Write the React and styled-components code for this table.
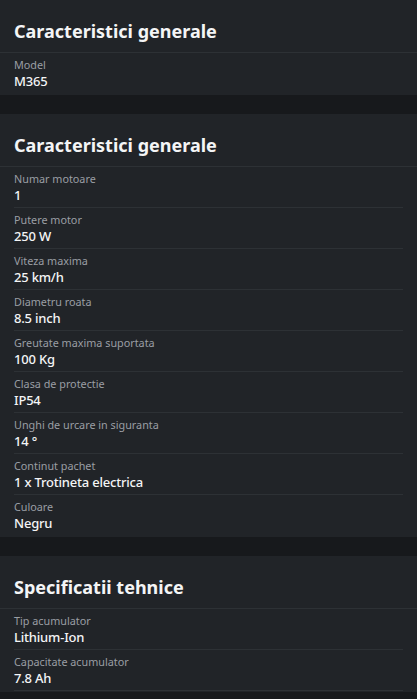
import React from "react";
import styled, { createGlobalStyle } from "styled-components";

const Global = createGlobalStyle`
  html, body { margin: 0; padding: 0; background: #17191c; }
  body { font-family: "Noto Sans", "Open Sans", sans-serif; -webkit-font-smoothing: antialiased; }
  * { box-sizing: border-box; }
`;

const Page = styled.div`
  display: flex;
  flex-direction: column;
  gap: 19px;
`;

const Card = styled.section`
  background: #212428;
  display: flex;
  flex-direction: column;
  padding-bottom: 1px;
`;

const Header = styled.h2`
  margin: 0;
  padding: 19px 14px 9px;
  height: 53px;
  font-size: 18px;
  line-height: 24px;
  font-weight: 700;
  color: #f4f5f6;
  border-bottom: 1px solid #2d3135;
`;

const Row = styled.div`
  margin: 0 14px;
  padding: 5px 0 3px;
  height: 41px;
  display: flex;
  flex-direction: column;
  border-bottom: 1px solid ${(p) => (p.$end ? "transparent" : "#2d3135")};
`;

const Label = styled.span`
  font-size: 10.8px;
  line-height: 14px;
  color: #9a9ea4;
`;

const Value = styled.span`
  font-size: 13px;
  line-height: 18px;
  font-weight: 500;
  letter-spacing: -0.2px;
  color: #f4f5f6;
`;

const sections = [
  { title: "Caracteristici generale", closed: true, rows: [["Model", "M365"]] },
  {
    title: "Caracteristici generale",
    closed: true,
    rows: [
      ["Numar motoare", "1"],
      ["Putere motor", "250 W"],
      ["Viteza maxima", "25 km/h"],
      ["Diametru roata", "8.5 inch"],
      ["Greutate maxima suportata", "100 Kg"],
      ["Clasa de protectie", "IP54"],
      ["Unghi de urcare in siguranta", "14 °"],
      ["Continut pachet", "1 x Trotineta electrica"],
      ["Culoare", "Negru"],
    ],
  },
  {
    title: "Specificatii tehnice",
    closed: false,
    rows: [
      ["Tip acumulator", "Lithium-Ion"],
      ["Capacitate acumulator", "7.8 Ah"],
    ],
  },
];

export default function App() {
  return (
    <>
      <Global />
      <Page>
        {sections.map((s, i) => (
          <Card key={i}>
            <Header>{s.title}</Header>
            {s.rows.map(([l, v], j) => (
              <Row key={l} $end={s.closed && j === s.rows.length - 1}>
                <Label>{l}</Label>
                <Value>{v}</Value>
              </Row>
            ))}
          </Card>
        ))}
      </Page>
    </>
  );
}
